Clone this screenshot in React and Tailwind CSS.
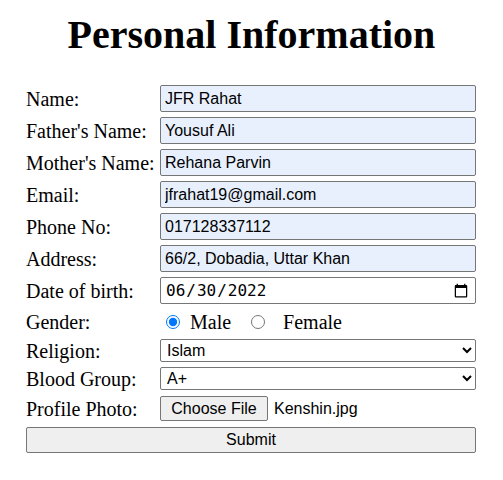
import React from 'react';

const serif = "font-['Liberation_Serif','Times_New_Roman',serif]";
const sans = "font-['Liberation_Sans',Arial,sans-serif]";

const textFields = [
  { label: 'Name:', value: 'JFR Rahat', type: 'text' },
  { label: "Father's Name:", value: 'Yousuf Ali', type: 'text' },
  { label: "Mother's Name:", value: 'Rehana Parvin', type: 'text' },
  { label: 'Email:', value: 'jfrahat19@gmail.com', type: 'email' },
  { label: 'Phone No:', value: '017128337112', type: 'tel' },
  { label: 'Address:', value: '66/2, Dobadia, Uttar Khan', type: 'text' },
];

const Row = ({ label, className = '', children }) => (
  <div className={`flex items-center ${className}`}>
    <label className={`w-[134px] shrink-0 text-[20px] leading-none text-black ${serif}`}>{label}</label>
    <div className="flex-1 flex items-center">{children}</div>
  </div>
);

const App = () => {
  return (
    <div className="w-[503px] h-[480px] bg-white text-black">
      <h1 className={`text-center text-[40px] font-bold leading-none pt-[15px] ${serif}`}>
        Personal Information
      </h1>
      <form className="w-[450px] ml-[26px] mt-[30px] flex flex-col" onSubmit={(e) => e.preventDefault()}>
        <div className="flex flex-col gap-[5px]">
          {textFields.map((f) => (
            <Row key={f.label} label={f.label}>
              <input
                type={f.type}
                defaultValue={f.value}
                className={`w-full h-[27px] px-[4px] text-[16px] bg-[#e8f0fe] border border-[#767676] rounded-[2px] ${sans}`}
              />
            </Row>
          ))}
          <Row label="Date of birth:">
            <input
              type="date"
              defaultValue="2022-06-30"
              className="w-full h-[27px] px-[4px] text-[16px] bg-white border border-[#767676] rounded-[2px] font-['DejaVu_Sans_Mono',monospace]"
            />
          </Row>
        </div>
        <Row label="Gender:" className="h-[31px] mt-[2px]">
          <label className={`flex items-center text-[20px] ${serif}`}>
            <input type="radio" name="gender" defaultChecked className="w-[14px] h-[14px] ml-[6px] mr-[10px] accent-[#0075ff]" />
            Male
          </label>
          <label className={`flex items-center text-[20px] ${serif}`}>
            <input type="radio" name="gender" className="w-[14px] h-[14px] ml-[20px] mr-[18px]" />
            Female
          </label>
        </Row>
        <div className="flex flex-col gap-[5px] mt-[2px]">
          <Row label="Religion:">
            <select defaultValue="Islam" className={`w-full h-[23px] px-[2px] text-[16px] bg-white border border-[#767676] rounded-[2px] ${sans}`}>
              <option>Islam</option>
              <option>Hinduism</option>
              <option>Christianity</option>
              <option>Buddhism</option>
            </select>
          </Row>
          <Row label="Blood Group:">
            <select defaultValue="A+" className={`w-full h-[23px] px-[2px] text-[16px] bg-white border border-[#767676] rounded-[2px] ${sans}`}>
              <option>A+</option>
              <option>A-</option>
              <option>B+</option>
              <option>B-</option>
              <option>O+</option>
              <option>O-</option>
              <option>AB+</option>
              <option>AB-</option>
            </select>
          </Row>
          <Row label="Profile Photo:" className="mt-[1px]">
            <button type="button" className={`h-[25px] w-[108px] text-[16px] bg-[#efefef] border border-[#767676] rounded-[2px] ${sans}`}>
              Choose File
            </button>
            <span className={`ml-[6px] text-[16px] ${sans}`}>Kenshin.jpg</span>
          </Row>
        </div>
        <button type="submit" className={`mt-[6px] w-full h-[26px] text-[16px] bg-[#efefef] border border-[#767676] rounded-[2px] ${sans}`}>
          Submit
        </button>
      </form>
    </div>
  );
};

export default App;
